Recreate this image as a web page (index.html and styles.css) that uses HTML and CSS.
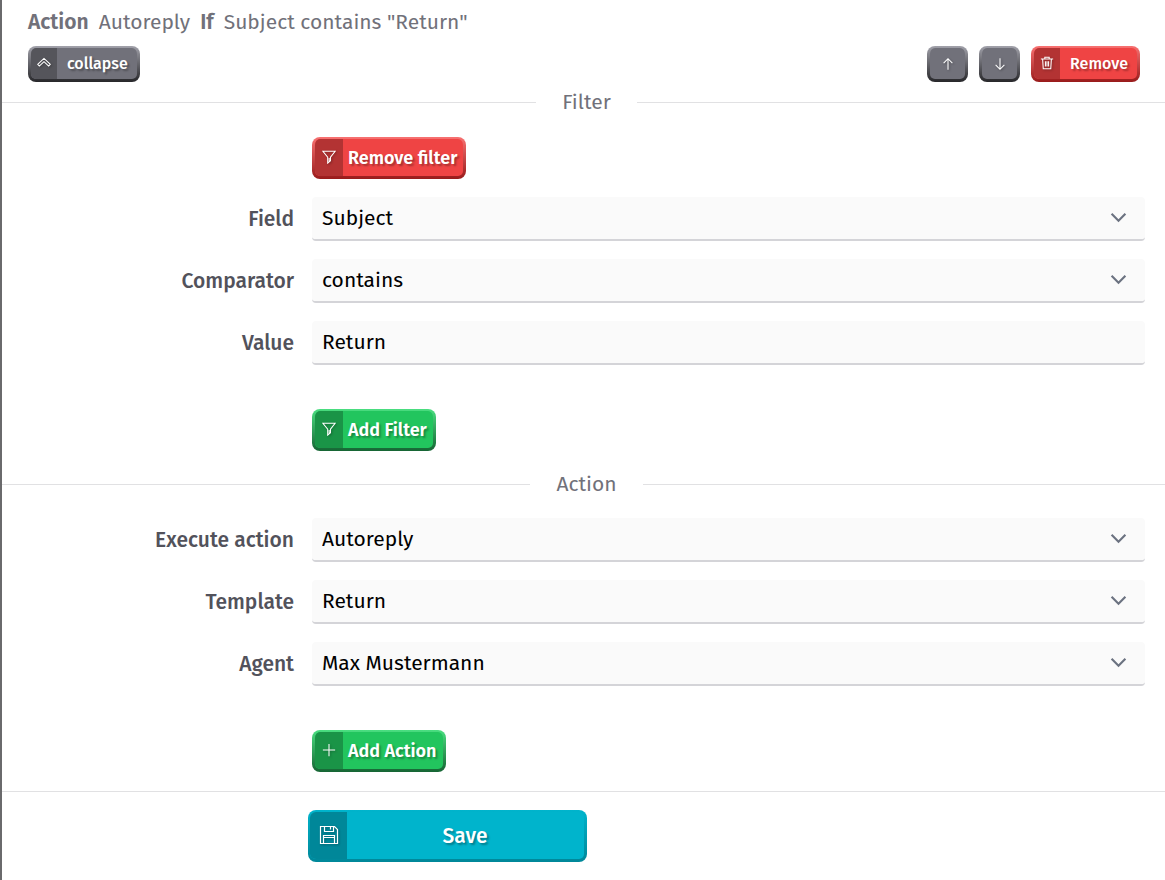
FILE: index.html
```
<!DOCTYPE html>
<html lang="en">
<head>
    <meta charset="UTF-8">
    <meta name="viewport" content="width=device-width, initial-scale=1.0">
    <title>Edit action</title>
    <link rel="stylesheet" href="styles.css">
</head>
<body>
    <form class="rule">
        <header class="rule-header">
            <p class="summary">
                <strong>Action</strong><span>Autoreply</span><strong>If</strong><span>Subject contains "Return"</span>
            </p>
            <div class="toolbar">
                <button type="button" class="btn btn-small btn-gray">
                    <span class="btn-icon">
                        <svg viewBox="0 0 16 16"><path d="M.8 9.500 8 2.800l7.200 6.700-1.800 2L8 6.500l-5.400 5zM2.600 11.500 8 6.500l5.400 5"/></svg>
                    </span>
                    <span class="btn-text">collapse</span>
                </button>
                <div class="toolbar-right">
                    <button type="button" class="btn btn-small btn-gray btn-square" aria-label="Move up">
                        <svg viewBox="0 0 16 16"><path d="M8 14.500V2M3 7l5-5 5 5"/></svg>
                    </button>
                    <button type="button" class="btn btn-small btn-gray btn-square" aria-label="Move down">
                        <svg viewBox="0 0 16 16"><path d="M8 1.500V14M3 9l5 5 5-5"/></svg>
                    </button>
                    <button type="button" class="btn btn-small btn-red">
                        <span class="btn-icon">
                            <svg viewBox="0 0 16 16"><path d="M1 3.500h14M5.500 3.500v-2h5v2M3 3.500l.7 11h8.600l.7-11M6.200 6v6M8 6v6M9.800 6v6"/></svg>
                        </span>
                        <span class="btn-text">Remove</span>
                    </button>
                </div>
            </div>
        </header>

        <h2 class="divider">Filter</h2>

        <section class="fields">
            <div class="field-action">
                <button type="button" class="btn btn-red">
                    <span class="btn-icon">
                        <svg viewBox="0 0 16 16"><path d="M1 1.500h14L9.700 8.300v4L6.500 15V8.300zM8.200 9v4"/></svg>
                    </span>
                    <span class="btn-text">Remove filter</span>
                </button>
            </div>

            <label for="field">Field</label>
            <div class="select">
                <select id="field"><option>Subject</option></select>
                <svg viewBox="0 0 16 16"><path d="m1.500 4.500 6.500 6.500 6.500-6.500"/></svg>
            </div>

            <label for="comparator">Comparator</label>
            <div class="select">
                <select id="comparator"><option>contains</option></select>
                <svg viewBox="0 0 16 16"><path d="m1.500 4.500 6.500 6.500 6.500-6.500"/></svg>
            </div>

            <label for="value">Value</label>
            <input type="text" id="value" value="Return">

            <div class="field-action add">
                <button type="button" class="btn btn-green">
                    <span class="btn-icon">
                        <svg viewBox="0 0 16 16"><path d="M1 1.500h14L9.700 8.300v4L6.500 15V8.300zM8.200 9v4"/></svg>
                    </span>
                    <span class="btn-text">Add Filter</span>
                </button>
            </div>
        </section>

        <h2 class="divider">Action</h2>

        <section class="fields">
            <label for="action">Execute action</label>
            <div class="select">
                <select id="action"><option>Autoreply</option></select>
                <svg viewBox="0 0 16 16"><path d="m1.500 4.500 6.500 6.500 6.500-6.500"/></svg>
            </div>

            <label for="template">Template</label>
            <div class="select">
                <select id="template"><option>Return</option></select>
                <svg viewBox="0 0 16 16"><path d="m1.500 4.500 6.500 6.500 6.500-6.500"/></svg>
            </div>

            <label for="agent">Agent</label>
            <div class="select">
                <select id="agent"><option>Max Mustermann</option></select>
                <svg viewBox="0 0 16 16"><path d="m1.500 4.500 6.500 6.500 6.500-6.500"/></svg>
            </div>

            <div class="field-action add">
                <button type="button" class="btn btn-green">
                    <span class="btn-icon">
                        <svg viewBox="0 0 16 16"><path d="M8 1v14M1 8h14"/></svg>
                    </span>
                    <span class="btn-text">Add Action</span>
                </button>
            </div>
        </section>

        <footer class="rule-footer">
            <button type="submit" class="btn btn-save">
                <span class="btn-icon">
                    <svg viewBox="0 0 20 20"><path d="M1.500 1.500h14l3 3v14h-17zM5.500 1.500v5h9v-5M11.500 2v2.500M4.500 18.500v-8h11v8M4.500 12.500h11"/></svg>
                </span>
                <span class="btn-text">Save</span>
            </button>
        </footer>
    </form>
</body>
</html>
```
FILE: styles.css
```
* {
    box-sizing: border-box;
}

body {
    margin: 0;
    background: #fff;
    color: #000;
    font-family: 'Fira Sans', 'Noto Sans', sans-serif;
    font-size: 21px;
    line-height: 24px;
}

.rule {
    min-height: 100vh;
    overflow: hidden;
    border-left: 2px solid #6a6a6c;
}

.rule-header {
    padding: 10px 25px 0 26px;
}

.summary {
    display: flex;
    gap: 10px;
    margin: 0 0 12px;
    color: #71717a;
}

.summary strong {
    font-weight: 600;
}

.toolbar,
.toolbar-right {
    display: flex;
    justify-content: space-between;
    gap: 11px;
}

.divider {
    display: flex;
    align-items: center;
    gap: 26px;
    margin: 8px -6px 23px 0;
    color: #71717a;
    font-size: 21px;
    font-weight: 400;
}

.divider::before,
.divider::after {
    content: '';
    flex: 1;
    border-top: 1px solid #e1e1e3;
}

.fields {
    display: grid;
    grid-template-columns: 272px 1fr;
    gap: 18px;
    align-items: center;
    padding: 0 20px;
}

.fields + .divider {
    margin-top: 21px;
    margin-bottom: 22px;
}

.fields label {
    color: #52525b;
    font-weight: 500;
    text-align: right;
}

.field-action {
    grid-column: 2;
    display: flex;
}

.field-action.add {
    margin-top: 26px;
}

.select {
    position: relative;
}

.select svg {
    position: absolute;
    top: 12px;
    right: 18px;
    width: 17px;
    height: 17px;
    fill: none;
    stroke: #6b7280;
    stroke-width: 2;
    pointer-events: none;
}

select,
input {
    display: block;
    width: 100%;
    height: 44px;
    padding: 0 10px;
    appearance: none;
    border: 0;
    border-bottom: 2px solid #d4d4d8;
    border-radius: 4px;
    background: #fafafa;
    color: #000;
    font: inherit;
}

/* Buttons */
.btn {
    display: flex;
    height: 42px;
    padding: 0;
    overflow: hidden;
    border: solid transparent;
    border-width: 2px 3px 3px;
    border-radius: 8px;
    background: linear-gradient(var(--face), var(--face)) padding-box,
        linear-gradient(var(--light), var(--dark)) border-box;
    color: #fff;
    font: 600 18px/38px 'Fira Sans', 'Noto Sans', sans-serif;
    text-shadow: 2px 2px 2px rgba(0, 0, 0, 0.3);
    cursor: pointer;
}

.btn svg {
    width: 14px;
    height: 14px;
    fill: none;
    stroke: #fff;
    stroke-width: 1.2;
    filter: drop-shadow(1px 1px 1px rgba(0, 0, 0, 0.3));
}

.btn-icon {
    display: flex;
    align-items: center;
    justify-content: center;
    width: 28px;
    height: 100%;
    padding-bottom: 2px;
    background: var(--shade);
}

.btn-text {
    flex: 1;
    padding: 0 6px 0 5px;
}

.btn-small {
    height: 36px;
    font-size: 16px;
    font-weight: 500;
    line-height: 32px;
}

.btn-small .btn-icon {
    width: 26px;
}

.btn-small .btn-text {
    padding: 0 9px 0 10px;
}

.btn-square {
    align-items: center;
    justify-content: center;
    width: 41px;
}

.btn-gray {
    --face: #71717a;
    --shade: #55555b;
    --light: #a1a1aa;
    --dark: #27272a;
}

.btn-red {
    --face: #ef4444;
    --shade: #b33333;
    --light: #f87171;
    --dark: #991b1b;
}

.btn-green {
    --face: #22c55e;
    --shade: #1a9447;
    --light: #4ade80;
    --dark: #166534;
}

.btn-save {
    --face: #00b4cc;
    --shade: #008799;
    --light: #00b4cc;
    --dark: #008799;
    width: 279px;
    height: 52px;
    border-left-width: 2px;
    font-size: 21px;
    font-weight: 500;
    line-height: 49px;
}

.btn-save .btn-icon {
    width: 37px;
}

.btn-save svg {
    width: 20px;
    height: 20px;
}

.rule-footer {
    margin-top: 19px;
    padding: 18px 306px;
    border-top: 1px solid #e1e1e3;
}
```
